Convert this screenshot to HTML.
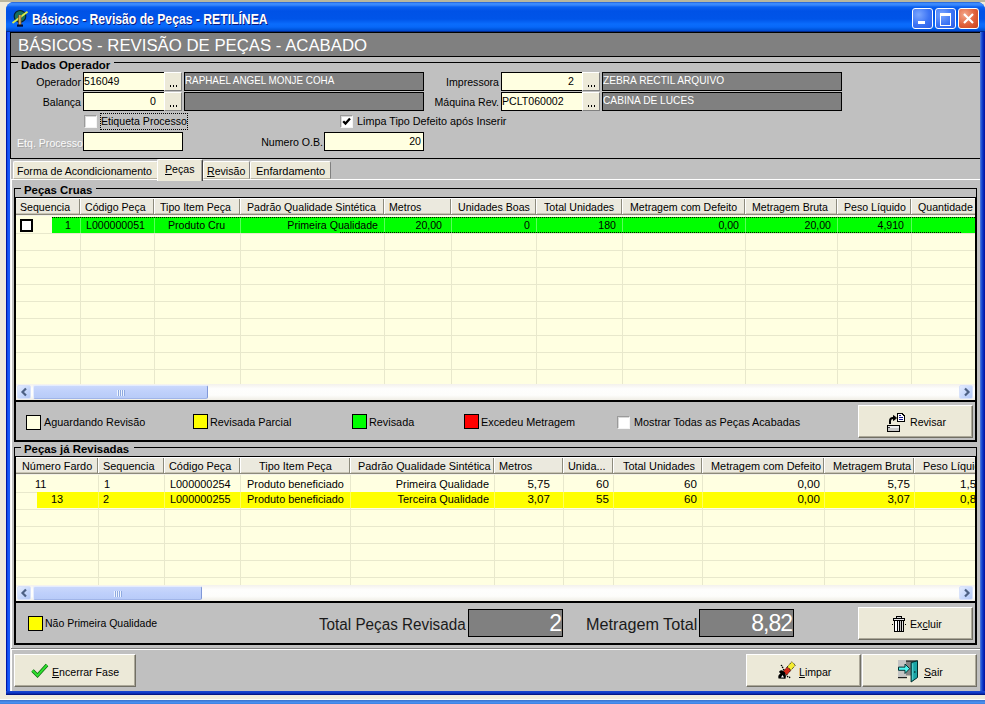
<!DOCTYPE html>
<html><head><meta charset="utf-8"><style>
html,body{margin:0;padding:0}
body{width:985px;height:704px;position:relative;overflow:hidden;font-family:"Liberation Sans",sans-serif;font-size:10.6px;color:#000}
.a{position:absolute}
.t{position:absolute;white-space:nowrap;line-height:13px}
svg.a{overflow:visible}
</style></head><body>
<div class="a" style="left:0px;top:0px;width:985px;height:704px;background:#eeebdc"></div>
<div class="a" style="left:0px;top:0px;width:985px;height:2px;background:#bab79e"></div>
<div class="a" style="left:0px;top:699px;width:985px;height:1px;background:#fbfffc"></div>
<div class="a" style="left:0px;top:700px;width:985px;height:4px;background:linear-gradient(#3a70c8,#4a90f0 60%,#3a80e0)"></div>
<div class="a" style="left:6px;top:2px;width:979px;height:693px;background:#0a4ee0;border-radius:8px 8px 0 0"></div>
<div class="a" style="left:6px;top:2px;width:979px;height:30px;background:linear-gradient(#1a4cc0 0px,#3c8cff 1px,#3a88fc 3px,#0a60f0 5px,#0052e6 9px,#0054e8 17px,#0a6cfc 22px,#0868f8 25px,#005ae4 27px,#0048cc 29px,#000c50 30px);border-radius:8px 8px 0 0"></div>
<div class="a" style="left:6px;top:32px;width:4px;height:659px;background:linear-gradient(90deg,#0018a8 0 1px,#0a4ae8 1px,#1c5cfc 3px,#1a58f0 4px)"></div>
<div class="a" style="left:980px;top:32px;width:5px;height:659px;background:linear-gradient(90deg,#5a80d0,#1a4ed8 35%,#0a32c0 60%,#0010a0)"></div>
<div class="a" style="left:6px;top:691px;width:979px;height:4px;background:linear-gradient(#1a48d0,#0a38c8 50%,#000a70)"></div>
<div class="a" style="left:10px;top:32px;width:970px;height:659px;background:#c0c0c0"></div>
<svg class="a" style="left:11px;top:8px" width="20" height="20" viewBox="0 0 20 20"><circle cx="9" cy="8.3" r="5.8" fill="#17705e" stroke="#062030" stroke-width="1.2"/>
<path d="M1.5 15 L16.5 3.8" stroke="#d8ec48" stroke-width="1.9"/>
<rect x="7.3" y="7" width="3" height="10" fill="#8a5010"/>
<rect x="8.4" y="7" width="1" height="10" fill="#f4e8b0"/>
<rect x="6" y="16.5" width="6" height="2.2" fill="#000a30"/></svg>
<div class="t" style="left:32px;top:13px;color:#fff;font-weight:bold;font-size:14px;transform:scaleX(0.87);transform-origin:0 0;text-shadow:1px 1px #0a1a80">Básicos - Revisão de Peças - RETILÍNEA</div>
<div class="a" style="left:912px;top:8px;width:21px;height:21px;background:radial-gradient(circle at 30% 30%,#7aa6ff,#3c74f4 55%,#2a5ce6);border:1px solid #fff;box-sizing:border-box;border-radius:3px"><div class="a" style="left:5px;top:12px;width:7px;height:3px;background:#fff"></div></div>
<div class="a" style="left:935px;top:8px;width:21px;height:21px;background:radial-gradient(circle at 30% 30%,#7aa6ff,#3c74f4 55%,#2a5ce6);border:1px solid #fff;box-sizing:border-box;border-radius:3px"><div class="a" style="left:4px;top:4px;width:9px;height:9px;border:1px solid #fff;border-top-width:3px;box-sizing:content-box"></div></div>
<div class="a" style="left:958px;top:8px;width:21px;height:21px;background:radial-gradient(circle at 30% 30%,#f4a88c,#e0603a 55%,#c8401c);border:1px solid #fff;box-sizing:border-box;border-radius:3px"><svg class="a" style="left:-1px;top:-1px" width="21" height="21"><path d="M6 6 L15 15 M15 6 L6 15" stroke="#fff" stroke-width="2.2"/></svg></div>
<div class="a" style="left:10px;top:32px;width:970px;height:25px;background:#808080;border:1px solid #000;border-right:none;box-sizing:border-box"></div>
<div class="t" style="left:18px;top:39px;color:#fff;font-size:16.75px;line-height:13px">BÁSICOS - REVISÃO DE PEÇAS - ACABADO</div>
<div class="a" style="left:10px;top:57px;width:970px;height:102px;border-left:1px solid #000;border-bottom:1px solid #000;box-sizing:border-box"></div>
<div class="a" style="left:11px;top:62px;width:969px;height:1px;background:#000"></div>
<div class="a" style="left:18px;top:57px;width:96px;height:11px;background:#c0c0c0"></div>
<div class="t" style="left:21px;top:59px;font-weight:bold;font-size:11.4px">Dados Operador</div>
<div class="t" style="right:904px;top:76px;text-align:right;">Operador</div>
<div class="a" style="left:83px;top:72px;width:82px;height:19px;background:#ffffe1;border:1px solid #000;box-sizing:border-box"></div>
<div class="t" style="left:84px;top:75px;">516049</div>
<div class="a" style="left:164px;top:72px;width:18px;height:19px;background:#ece9d8;border-top:1px solid #fff;border-left:1px solid #fff;border-right:1px solid #808080;border-bottom:1px solid #808080;box-sizing:border-box"><div class="a" style="left:5px;top:12px;width:1px;height:2px;background:#000"></div><div class="a" style="left:8px;top:12px;width:1px;height:2px;background:#000"></div><div class="a" style="left:11px;top:12px;width:1px;height:2px;background:#000"></div></div>
<div class="a" style="left:184px;top:72px;width:240px;height:19px;background:#808080;border:1px solid #000;box-sizing:border-box"></div>
<div class="t" style="left:185px;top:74px;color:#fff"><span style="display:inline-block;transform:scaleX(0.93);transform-origin:0 0">RAPHAEL ANGEL MONJE COHA</span></div>
<div class="t" style="right:904px;top:96px;text-align:right;">Balança</div>
<div class="a" style="left:83px;top:92px;width:82px;height:19px;background:#ffffe1;border:1px solid #000;box-sizing:border-box"></div>
<div class="t" style="right:829px;top:95px;text-align:right;">0</div>
<div class="a" style="left:164px;top:92px;width:18px;height:19px;background:#ece9d8;border-top:1px solid #fff;border-left:1px solid #fff;border-right:1px solid #808080;border-bottom:1px solid #808080;box-sizing:border-box"><div class="a" style="left:5px;top:12px;width:1px;height:2px;background:#000"></div><div class="a" style="left:8px;top:12px;width:1px;height:2px;background:#000"></div><div class="a" style="left:11px;top:12px;width:1px;height:2px;background:#000"></div></div>
<div class="a" style="left:184px;top:92px;width:240px;height:19px;background:#808080;border:1px solid #000;box-sizing:border-box"></div>
<div class="a" style="left:84px;top:115px;width:13px;height:13px;background:#fff;border-top:1px solid #9a9a9a;border-left:1px solid #9a9a9a;border-right:1px solid #f4f4f4;border-bottom:1px solid #f4f4f4;box-shadow:inset 1px 1px 0 #d8d8d8;box-sizing:border-box"></div>
<div class="a" style="left:100px;top:113px;width:88px;height:17px;border:1px dotted #000;box-sizing:border-box"></div>
<div class="t" style="left:101px;top:115px;">Etiqueta Processo</div>
<div class="t" style="left:17px;top:137px;color:#fafafa;text-shadow:1px 1px 0 #a8a8a8">Etq. Processo</div>
<div class="a" style="left:83px;top:132px;width:100px;height:19px;background:#ffffe1;border:1px solid #000;box-sizing:border-box"></div>
<div class="t" style="right:486px;top:76px;text-align:right;">Impressora</div>
<div class="a" style="left:501px;top:72px;width:82px;height:19px;background:#ffffe1;border:1px solid #000;box-sizing:border-box"></div>
<div class="t" style="right:411px;top:75px;text-align:right;">2</div>
<div class="a" style="left:582px;top:72px;width:18px;height:19px;background:#ece9d8;border-top:1px solid #fff;border-left:1px solid #fff;border-right:1px solid #808080;border-bottom:1px solid #808080;box-sizing:border-box"><div class="a" style="left:5px;top:12px;width:1px;height:2px;background:#000"></div><div class="a" style="left:8px;top:12px;width:1px;height:2px;background:#000"></div><div class="a" style="left:11px;top:12px;width:1px;height:2px;background:#000"></div></div>
<div class="a" style="left:602px;top:72px;width:240px;height:19px;background:#808080;border:1px solid #000;box-sizing:border-box"></div>
<div class="t" style="left:603px;top:74px;color:#fff"><span style="display:inline-block;transform:scaleX(0.96);transform-origin:0 0">ZEBRA RECTIL ARQUIVO</span></div>
<div class="t" style="right:486px;top:96px;text-align:right;">Máquina Rev.</div>
<div class="a" style="left:501px;top:92px;width:82px;height:19px;background:#ffffe1;border:1px solid #000;box-sizing:border-box"></div>
<div class="t" style="left:502px;top:95px;">PCLT060002</div>
<div class="a" style="left:582px;top:92px;width:18px;height:19px;background:#ece9d8;border-top:1px solid #fff;border-left:1px solid #fff;border-right:1px solid #808080;border-bottom:1px solid #808080;box-sizing:border-box"><div class="a" style="left:5px;top:12px;width:1px;height:2px;background:#000"></div><div class="a" style="left:8px;top:12px;width:1px;height:2px;background:#000"></div><div class="a" style="left:11px;top:12px;width:1px;height:2px;background:#000"></div></div>
<div class="a" style="left:602px;top:92px;width:240px;height:19px;background:#808080;border:1px solid #000;box-sizing:border-box"></div>
<div class="t" style="left:603px;top:94px;color:#fff"><span style="display:inline-block;transform:scaleX(0.96);transform-origin:0 0">CABINA DE LUCES</span></div>
<div class="a" style="left:340px;top:115px;width:13px;height:13px;background:#fff;border-top:1px solid #9a9a9a;border-left:1px solid #9a9a9a;border-right:1px solid #f4f4f4;border-bottom:1px solid #f4f4f4;box-shadow:inset 1px 1px 0 #d8d8d8;box-sizing:border-box"><svg class="a" style="left:1px;top:1px" width="9" height="9"><path d="M1.2 4.2 L3.5 6.6 L8 1.6" stroke="#000" stroke-width="2.3" fill="none"/></svg></div>
<div class="t" style="left:357px;top:115px;font-size:10.8px">Limpa Tipo Defeito após Inserir</div>
<div class="t" style="right:662px;top:136px;text-align:right;">Numero O.B.</div>
<div class="a" style="left:324px;top:132px;width:100px;height:19px;background:#ffffe1;border:1px solid #000;box-sizing:border-box"></div>
<div class="t" style="right:564px;top:135px;text-align:right;">20</div>
<div class="a" style="left:11px;top:179px;width:969px;height:512px;background:#c0c0c0;border-top:1px solid #fff;border-left:1px solid #fff;box-sizing:border-box"></div>
<div class="a" style="left:10px;top:159px;width:1px;height:532px;background:#f4f4f4"></div>
<div class="a" style="left:13px;top:161px;width:145px;height:18px;background:#ece9d8;border-top:1px solid #fff;border-left:1px solid #fff;border-right:1px solid #808080;border-bottom:1px solid #b8b4a4;box-sizing:border-box;border-radius:2px 2px 0 0"></div>
<div class="t" style="left:17px;top:165px;">Forma de Acondicionamento</div>
<div class="a" style="left:203px;top:161px;width:47px;height:18px;background:#ece9d8;border-top:1px solid #fff;border-left:1px solid #fff;border-right:1px solid #808080;border-bottom:1px solid #b8b4a4;box-sizing:border-box;border-radius:2px 2px 0 0"></div>
<div class="t" style="left:207px;top:165px;"><u>R</u>evisão</div>
<div class="a" style="left:250px;top:161px;width:81px;height:18px;background:#ece9d8;border-top:1px solid #fff;border-left:1px solid #fff;border-right:1px solid #808080;border-bottom:1px solid #b8b4a4;box-sizing:border-box;border-radius:2px 2px 0 0"></div>
<div class="t" style="left:256px;top:165px;"><span style="display:inline-block;transform:scaleX(1.04);transform-origin:0 0">Enfardamento</span></div>
<div class="a" style="left:157px;top:159px;width:46px;height:22px;background:#ece9d8;border-top:1px solid #fff;border-left:1px solid #fff;border-right:1px solid #404040;box-shadow:inset -1px 0 0 #a0a0a0;box-sizing:border-box;border-radius:2px 2px 0 0"></div>
<div class="t" style="left:165px;top:163px;"><u>P</u>eças</div>
<div class="a" style="left:14px;top:188px;width:963px;height:254px;border:1px solid #000;box-sizing:border-box"></div>
<div class="a" style="left:15px;top:440px;width:961px;height:1px;background:#000"></div>
<div class="a" style="left:15px;top:197px;width:1px;height:244px;background:#000"></div>
<div class="a" style="left:975px;top:197px;width:1px;height:244px;background:#000"></div>
<div class="a" style="left:21px;top:184px;width:75px;height:11px;background:#c0c0c0"></div>
<div class="t" style="left:24px;top:184px;font-weight:bold;font-size:11.4px">Peças Cruas</div>
<div class="a" style="left:14px;top:197px;width:962px;height:205px;background:#ffffe1;border-left:2px solid #000;border-top:1px solid #000;border-right:1px solid #000;border-bottom:2px solid #000;box-sizing:border-box"></div>
<div class="a" style="left:16px;top:198px;width:959px;height:17px;background:#ebe9de;border-top:1px solid #fff;border-bottom:1px solid #8c8a7c;box-shadow:inset 0 -1px 0 #c8c4b4;box-sizing:border-box"></div>
<div class="a" style="left:16px;top:215px;width:959px;height:1px;background:#f4f2e8"></div>
<div class="a" style="left:0;top:0;width:985px;height:704px;clip-path:inset(0 10px 0 0)">
<div class="a" style="left:16px;top:233px;width:959px;height:1px;background:#e8e8cc"></div>
<div class="a" style="left:16px;top:250px;width:959px;height:1px;background:#e8e8cc"></div>
<div class="a" style="left:16px;top:267px;width:959px;height:1px;background:#e8e8cc"></div>
<div class="a" style="left:16px;top:284px;width:959px;height:1px;background:#e8e8cc"></div>
<div class="a" style="left:16px;top:301px;width:959px;height:1px;background:#e8e8cc"></div>
<div class="a" style="left:16px;top:318px;width:959px;height:1px;background:#e8e8cc"></div>
<div class="a" style="left:16px;top:335px;width:959px;height:1px;background:#e8e8cc"></div>
<div class="a" style="left:16px;top:352px;width:959px;height:1px;background:#e8e8cc"></div>
<div class="a" style="left:16px;top:369px;width:959px;height:1px;background:#e8e8cc"></div>
<div class="a" style="left:80px;top:216px;width:1px;height:168px;background:#e8e8cc"></div>
<div class="a" style="left:79px;top:199px;width:1px;height:15px;background:#8c8a7c"></div>
<div class="a" style="left:80px;top:199px;width:1px;height:15px;background:#fff"></div>
<div class="t" style="left:20px;top:201px;width:59px;overflow:hidden;">Sequencia</div>
<div class="a" style="left:154px;top:216px;width:1px;height:168px;background:#e8e8cc"></div>
<div class="a" style="left:153px;top:199px;width:1px;height:15px;background:#8c8a7c"></div>
<div class="a" style="left:154px;top:199px;width:1px;height:15px;background:#fff"></div>
<div class="t" style="left:85px;top:201px;width:68px;overflow:hidden;">Código Peça</div>
<div class="a" style="left:240px;top:216px;width:1px;height:168px;background:#e8e8cc"></div>
<div class="a" style="left:239px;top:199px;width:1px;height:15px;background:#8c8a7c"></div>
<div class="a" style="left:240px;top:199px;width:1px;height:15px;background:#fff"></div>
<div class="t" style="left:160px;top:201px;width:79px;overflow:hidden;">Tipo Item Peça</div>
<div class="a" style="left:384px;top:216px;width:1px;height:168px;background:#e8e8cc"></div>
<div class="a" style="left:383px;top:199px;width:1px;height:15px;background:#8c8a7c"></div>
<div class="a" style="left:384px;top:199px;width:1px;height:15px;background:#fff"></div>
<div class="t" style="left:247px;top:201px;width:136px;overflow:hidden;">Padrão Qualidade Sintética</div>
<div class="a" style="left:451px;top:216px;width:1px;height:168px;background:#e8e8cc"></div>
<div class="a" style="left:450px;top:199px;width:1px;height:15px;background:#8c8a7c"></div>
<div class="a" style="left:451px;top:199px;width:1px;height:15px;background:#fff"></div>
<div class="t" style="left:389px;top:201px;width:61px;overflow:hidden;">Metros</div>
<div class="a" style="left:536px;top:216px;width:1px;height:168px;background:#e8e8cc"></div>
<div class="a" style="left:535px;top:199px;width:1px;height:15px;background:#8c8a7c"></div>
<div class="a" style="left:536px;top:199px;width:1px;height:15px;background:#fff"></div>
<div class="t" style="left:458px;top:201px;width:77px;overflow:hidden;">Unidades Boas</div>
<div class="a" style="left:622px;top:216px;width:1px;height:168px;background:#e8e8cc"></div>
<div class="a" style="left:621px;top:199px;width:1px;height:15px;background:#8c8a7c"></div>
<div class="a" style="left:622px;top:199px;width:1px;height:15px;background:#fff"></div>
<div class="t" style="left:544px;top:201px;width:77px;overflow:hidden;">Total Unidades</div>
<div class="a" style="left:745px;top:216px;width:1px;height:168px;background:#e8e8cc"></div>
<div class="a" style="left:744px;top:199px;width:1px;height:15px;background:#8c8a7c"></div>
<div class="a" style="left:745px;top:199px;width:1px;height:15px;background:#fff"></div>
<div class="t" style="left:630px;top:201px;width:114px;overflow:hidden;">Metragem com Defeito</div>
<div class="a" style="left:837px;top:216px;width:1px;height:168px;background:#e8e8cc"></div>
<div class="a" style="left:836px;top:199px;width:1px;height:15px;background:#8c8a7c"></div>
<div class="a" style="left:837px;top:199px;width:1px;height:15px;background:#fff"></div>
<div class="t" style="left:752px;top:201px;width:84px;overflow:hidden;">Metragem Bruta</div>
<div class="a" style="left:911px;top:216px;width:1px;height:168px;background:#e8e8cc"></div>
<div class="a" style="left:910px;top:199px;width:1px;height:15px;background:#8c8a7c"></div>
<div class="a" style="left:911px;top:199px;width:1px;height:15px;background:#fff"></div>
<div class="t" style="left:844px;top:201px;width:66px;overflow:hidden;">Peso Líquido</div>
<div class="t" style="left:918px;top:201px;width:57px;overflow:hidden;">Quantidade</div>
<div class="a" style="left:52px;top:217px;width:923px;height:16px;background:#00ff00"></div>
<div class="a" style="left:80px;top:217px;width:1px;height:16px;background:rgba(255,255,255,0.35)"></div>
<div class="a" style="left:154px;top:217px;width:1px;height:16px;background:rgba(255,255,255,0.35)"></div>
<div class="a" style="left:240px;top:217px;width:1px;height:16px;background:rgba(255,255,255,0.35)"></div>
<div class="a" style="left:384px;top:217px;width:1px;height:16px;background:rgba(255,255,255,0.35)"></div>
<div class="a" style="left:451px;top:217px;width:1px;height:16px;background:rgba(255,255,255,0.35)"></div>
<div class="a" style="left:536px;top:217px;width:1px;height:16px;background:rgba(255,255,255,0.35)"></div>
<div class="a" style="left:622px;top:217px;width:1px;height:16px;background:rgba(255,255,255,0.35)"></div>
<div class="a" style="left:745px;top:217px;width:1px;height:16px;background:rgba(255,255,255,0.35)"></div>
<div class="a" style="left:837px;top:217px;width:1px;height:16px;background:rgba(255,255,255,0.35)"></div>
<div class="a" style="left:911px;top:217px;width:1px;height:16px;background:rgba(255,255,255,0.35)"></div>
<div class="t" style="right:914px;top:219px;text-align:right;">1</div>
<div class="t" style="left:86px;top:219px;">L000000051</div>
<div class="t" style="left:154px;width:85px;top:219px;text-align:center;">Produto Cru</div>
<div class="t" style="right:607px;top:219px;text-align:right;">Primeira Qualidade</div>
<div class="t" style="right:543px;top:219px;text-align:right;">20,00</div>
<div class="t" style="right:455px;top:219px;text-align:right;">0</div>
<div class="t" style="right:369px;top:219px;text-align:right;">180</div>
<div class="t" style="right:246px;top:219px;text-align:right;">0,00</div>
<div class="t" style="right:154px;top:219px;text-align:right;">20,00</div>
<div class="t" style="right:81px;top:219px;text-align:right;">4,910</div>
</div>
<div class="a" style="left:16px;top:384px;width:959px;height:16px;background:linear-gradient(#f3f1ec,#fefefd 30%,#fdfdfb 70%,#f0eee6)"></div>
<div class="a" style="left:17px;top:385px;width:14px;height:14px;background:linear-gradient(135deg,#e4ecfe,#c4d6fc 60%,#b4c8f6);border:1px solid #d8e2fa;border-radius:2px;box-sizing:border-box"><svg class="a" style="left:0;top:0" width="13" height="12"><path d="M8 2.5 L4.5 6 L8 9.5" stroke="#4d6185" stroke-width="2.2" fill="none"/></svg></div>
<div class="a" style="left:33px;top:385px;width:175px;height:14px;background:linear-gradient(#cad8fc,#bfd0fb 50%,#b8cbf8);border:1px solid #e4ecfe;border-right-color:#8098d8;border-bottom-color:#a0b4e8;border-radius:2px;box-sizing:border-box"><div class="a" style="left:83px;top:4px;width:8px;height:6px;background:repeating-linear-gradient(90deg,#eef4ff 0 1px,#8faae0 1px 2px)"></div></div>
<div class="a" style="left:959px;top:385px;width:14px;height:14px;background:linear-gradient(135deg,#e4ecfe,#c4d6fc 60%,#b4c8f6);border:1px solid #d8e2fa;border-radius:2px;box-sizing:border-box"><svg class="a" style="left:0;top:0" width="13" height="12"><path d="M5 2.5 L8.5 6 L5 9.5" stroke="#4d6185" stroke-width="2.2" fill="none"/></svg></div>
<div class="a" style="left:20px;top:219px;width:13px;height:13px;background:#fff;border:2px solid #000;box-sizing:border-box"></div>
<div class="a" style="left:52px;top:217px;width:923px;height:1px;background:repeating-linear-gradient(90deg,#000 0 1px,transparent 1px 2px)"></div>
<div class="a" style="left:340px;top:232px;width:621px;height:1px;background:repeating-linear-gradient(90deg,#000 0 1px,transparent 1px 2px)"></div>
<div class="a" style="left:26px;top:415px;width:15px;height:15px;background:#ffffe1;border:1px solid #000;box-sizing:border-box"></div>
<div class="t" style="left:44px;top:416px;font-size:10.85px">Aguardando Revisão</div>
<div class="a" style="left:193px;top:414px;width:15px;height:15px;background:#ffff00;border:1px solid #000;box-sizing:border-box"></div>
<div class="t" style="left:210px;top:416px;font-size:10.85px">Revisada Parcial</div>
<div class="a" style="left:352px;top:414px;width:15px;height:15px;background:#00ff00;border:1px solid #000;box-sizing:border-box"></div>
<div class="t" style="left:369px;top:416px;font-size:10.85px">Revisada</div>
<div class="a" style="left:464px;top:414px;width:15px;height:15px;background:#ff0000;border:1px solid #000;box-sizing:border-box"></div>
<div class="t" style="left:481px;top:416px;font-size:10.85px">Excedeu Metragem</div>
<div class="a" style="left:617px;top:416px;width:13px;height:13px;background:#fff;border-top:1px solid #9a9a9a;border-left:1px solid #9a9a9a;border-right:1px solid #f4f4f4;border-bottom:1px solid #f4f4f4;box-shadow:inset 1px 1px 0 #d8d8d8;box-sizing:border-box"></div>
<div class="t" style="left:634px;top:416px;font-size:10.8px">Mostrar Todas as Peças Acabadas</div>
<div class="a" style="left:858px;top:405px;width:115px;height:33px;background:#ece9d8;border-top:1px solid #fff;border-left:1px solid #fff;border-right:1px solid #716f64;border-bottom:1px solid #716f64;box-shadow:inset -1px -1px 0 #aca899;box-sizing:border-box"></div>
<svg class="a" style="left:886px;top:412px" width="20" height="20" viewBox="0 0 20 20"><path d="M4 12 L4 9 Q4 6 7 6 L8 6" stroke="#000" stroke-width="2" fill="none"/>
<path d="M7.5 3.5 L10.5 6 L7.5 8.5 Z" fill="#000" stroke="#000" stroke-width="1"/>
<g shape-rendering="crispEdges">
<path d="M11 1 L17 1 L17 2 L18 2 L18 3 L19 3 L19 10 L11 10 Z" fill="#000"/>
<path d="M12 2 L16 2 L16 3 L17 3 L17 4 L18 4 L18 9 L12 9 Z" fill="#fff"/>
<rect x="13" y="3" width="2" height="1" fill="#10108a"/><rect x="13" y="5" width="4" height="1" fill="#10108a"/><rect x="13" y="7" width="4" height="1" fill="#10108a"/>
<rect x="1" y="13" width="13" height="7" fill="#000"/>
<rect x="2" y="14" width="11" height="5" fill="#c8c8c8"/><rect x="2" y="14" width="11" height="2" fill="#ececec"/><rect x="2" y="15" width="2" height="1" fill="#404040"/>
</g></svg>
<div class="t" style="left:910px;top:416px;">Revisar</div>
<div class="a" style="left:14px;top:447px;width:963px;height:198px;border:1px solid #000;box-sizing:border-box"></div>
<div class="a" style="left:15px;top:643px;width:961px;height:1px;background:#000"></div>
<div class="a" style="left:15px;top:456px;width:1px;height:188px;background:#000"></div>
<div class="a" style="left:975px;top:456px;width:1px;height:188px;background:#000"></div>
<div class="a" style="left:21px;top:443px;width:113px;height:11px;background:#c0c0c0"></div>
<div class="t" style="left:24px;top:443px;font-weight:bold;font-size:11.4px">Peças já Revisadas</div>
<div class="a" style="left:14px;top:456px;width:962px;height:147px;background:#ffffe1;border-left:2px solid #000;border-top:1px solid #000;border-right:1px solid #000;border-bottom:2px solid #000;box-sizing:border-box"></div>
<div class="a" style="left:16px;top:457px;width:959px;height:17px;background:#ebe9de;border-top:1px solid #fff;border-bottom:1px solid #8c8a7c;box-shadow:inset 0 -1px 0 #c8c4b4;box-sizing:border-box"></div>
<div class="a" style="left:16px;top:474px;width:959px;height:1px;background:#f4f2e8"></div>
<div class="a" style="left:0;top:0;width:985px;height:704px;clip-path:inset(0 10px 0 0)">
<div class="a" style="left:16px;top:492px;width:959px;height:1px;background:#e8e8cc"></div>
<div class="a" style="left:16px;top:509px;width:959px;height:1px;background:#e8e8cc"></div>
<div class="a" style="left:16px;top:526px;width:959px;height:1px;background:#e8e8cc"></div>
<div class="a" style="left:16px;top:543px;width:959px;height:1px;background:#e8e8cc"></div>
<div class="a" style="left:16px;top:560px;width:959px;height:1px;background:#e8e8cc"></div>
<div class="a" style="left:16px;top:577px;width:959px;height:1px;background:#e8e8cc"></div>
<div class="a" style="left:98px;top:475px;width:1px;height:110px;background:#e8e8cc"></div>
<div class="a" style="left:97px;top:458px;width:1px;height:15px;background:#8c8a7c"></div>
<div class="a" style="left:98px;top:458px;width:1px;height:15px;background:#fff"></div>
<div class="t" style="left:22px;top:460px;width:75px;overflow:hidden;font-size:10.9px">Número Fardo</div>
<div class="a" style="left:164px;top:475px;width:1px;height:110px;background:#e8e8cc"></div>
<div class="a" style="left:163px;top:458px;width:1px;height:15px;background:#8c8a7c"></div>
<div class="a" style="left:164px;top:458px;width:1px;height:15px;background:#fff"></div>
<div class="t" style="left:103px;top:460px;width:60px;overflow:hidden;font-size:10.9px">Sequencia</div>
<div class="a" style="left:240px;top:475px;width:1px;height:110px;background:#e8e8cc"></div>
<div class="a" style="left:239px;top:458px;width:1px;height:15px;background:#8c8a7c"></div>
<div class="a" style="left:240px;top:458px;width:1px;height:15px;background:#fff"></div>
<div class="t" style="left:169px;top:460px;width:70px;overflow:hidden;font-size:10.9px">Código Peça</div>
<div class="a" style="left:350px;top:475px;width:1px;height:110px;background:#e8e8cc"></div>
<div class="a" style="left:349px;top:458px;width:1px;height:15px;background:#8c8a7c"></div>
<div class="a" style="left:350px;top:458px;width:1px;height:15px;background:#fff"></div>
<div class="t" style="left:259px;top:460px;width:90px;overflow:hidden;font-size:10.9px">Tipo Item Peça</div>
<div class="a" style="left:494px;top:475px;width:1px;height:110px;background:#e8e8cc"></div>
<div class="a" style="left:493px;top:458px;width:1px;height:15px;background:#8c8a7c"></div>
<div class="a" style="left:494px;top:458px;width:1px;height:15px;background:#fff"></div>
<div class="t" style="left:358px;top:460px;width:135px;overflow:hidden;font-size:10.9px">Padrão Qualidade Sintética</div>
<div class="a" style="left:563px;top:475px;width:1px;height:110px;background:#e8e8cc"></div>
<div class="a" style="left:562px;top:458px;width:1px;height:15px;background:#8c8a7c"></div>
<div class="a" style="left:563px;top:458px;width:1px;height:15px;background:#fff"></div>
<div class="t" style="left:499px;top:460px;width:63px;overflow:hidden;font-size:10.9px">Metros</div>
<div class="a" style="left:613px;top:475px;width:1px;height:110px;background:#e8e8cc"></div>
<div class="a" style="left:612px;top:458px;width:1px;height:15px;background:#8c8a7c"></div>
<div class="a" style="left:613px;top:458px;width:1px;height:15px;background:#fff"></div>
<div class="t" style="left:568px;top:460px;width:44px;overflow:hidden;font-size:10.9px">Unida...</div>
<div class="a" style="left:702px;top:475px;width:1px;height:110px;background:#e8e8cc"></div>
<div class="a" style="left:701px;top:458px;width:1px;height:15px;background:#8c8a7c"></div>
<div class="a" style="left:702px;top:458px;width:1px;height:15px;background:#fff"></div>
<div class="t" style="left:623px;top:460px;width:78px;overflow:hidden;font-size:10.9px">Total Unidades</div>
<div class="a" style="left:824px;top:475px;width:1px;height:110px;background:#e8e8cc"></div>
<div class="a" style="left:823px;top:458px;width:1px;height:15px;background:#8c8a7c"></div>
<div class="a" style="left:824px;top:458px;width:1px;height:15px;background:#fff"></div>
<div class="t" style="left:711px;top:460px;width:112px;overflow:hidden;font-size:10.9px">Metragem com Defeito</div>
<div class="a" style="left:914px;top:475px;width:1px;height:110px;background:#e8e8cc"></div>
<div class="a" style="left:913px;top:458px;width:1px;height:15px;background:#8c8a7c"></div>
<div class="a" style="left:914px;top:458px;width:1px;height:15px;background:#fff"></div>
<div class="t" style="left:833px;top:460px;width:80px;overflow:hidden;font-size:10.9px">Metragem Bruta</div>
<div class="t" style="left:923px;top:460px;width:52px;overflow:hidden;font-size:10.9px">Peso Líquido</div>
<div class="t" style="left:35px;top:478px;font-size:10.9px">11</div>
<div class="t" style="left:104px;top:478px;font-size:10.9px">1</div>
<div class="t" style="left:170px;top:478px;font-size:10.9px">L000000254</div>
<div class="t" style="left:239px;width:113px;top:478px;text-align:center;font-size:10.9px">Produto beneficiado</div>
<div class="t" style="right:496px;top:478px;text-align:right;font-size:10.9px">Primeira Qualidade</div>
<div class="t" style="right:435px;top:478px;text-align:right;font-size:10.9px"><span style="font-size:11.6px;position:relative;top:-1px">5,75</span></div>
<div class="t" style="right:376px;top:478px;text-align:right;font-size:10.9px"><span style="font-size:11.6px;position:relative;top:-1px">60</span></div>
<div class="t" style="right:288px;top:478px;text-align:right;font-size:10.9px"><span style="font-size:11.6px;position:relative;top:-1px">60</span></div>
<div class="t" style="right:165px;top:478px;text-align:right;font-size:10.9px"><span style="font-size:11.6px;position:relative;top:-1px">0,00</span></div>
<div class="t" style="right:75px;top:478px;text-align:right;font-size:10.9px"><span style="font-size:11.6px;position:relative;top:-1px">5,75</span></div>
<div class="t" style="left:960px;top:478px;font-size:10.9px"><span style="font-size:11.6px;position:relative;top:-1px">1,50</span></div>
<div class="a" style="left:37px;top:492px;width:938px;height:16px;background:#ffff00"></div>
<div class="a" style="left:98px;top:492px;width:1px;height:16px;background:rgba(255,255,255,0.35)"></div>
<div class="a" style="left:164px;top:492px;width:1px;height:16px;background:rgba(255,255,255,0.35)"></div>
<div class="a" style="left:240px;top:492px;width:1px;height:16px;background:rgba(255,255,255,0.35)"></div>
<div class="a" style="left:350px;top:492px;width:1px;height:16px;background:rgba(255,255,255,0.35)"></div>
<div class="a" style="left:494px;top:492px;width:1px;height:16px;background:rgba(255,255,255,0.35)"></div>
<div class="a" style="left:563px;top:492px;width:1px;height:16px;background:rgba(255,255,255,0.35)"></div>
<div class="a" style="left:613px;top:492px;width:1px;height:16px;background:rgba(255,255,255,0.35)"></div>
<div class="a" style="left:702px;top:492px;width:1px;height:16px;background:rgba(255,255,255,0.35)"></div>
<div class="a" style="left:824px;top:492px;width:1px;height:16px;background:rgba(255,255,255,0.35)"></div>
<div class="a" style="left:914px;top:492px;width:1px;height:16px;background:rgba(255,255,255,0.35)"></div>
<div class="t" style="left:51px;top:493px;font-size:10.9px">13</div>
<div class="t" style="left:103px;top:493px;font-size:10.9px">2</div>
<div class="t" style="left:170px;top:493px;font-size:10.9px">L000000255</div>
<div class="t" style="left:239px;width:113px;top:493px;text-align:center;font-size:10.9px">Produto beneficiado</div>
<div class="t" style="right:496px;top:493px;text-align:right;font-size:10.9px">Terceira Qualidade</div>
<div class="t" style="right:435px;top:493px;text-align:right;font-size:10.9px"><span style="font-size:11.6px;position:relative;top:-1px">3,07</span></div>
<div class="t" style="right:376px;top:493px;text-align:right;font-size:10.9px"><span style="font-size:11.6px;position:relative;top:-1px">55</span></div>
<div class="t" style="right:288px;top:493px;text-align:right;font-size:10.9px"><span style="font-size:11.6px;position:relative;top:-1px">60</span></div>
<div class="t" style="right:165px;top:493px;text-align:right;font-size:10.9px"><span style="font-size:11.6px;position:relative;top:-1px">0,00</span></div>
<div class="t" style="right:75px;top:493px;text-align:right;font-size:10.9px"><span style="font-size:11.6px;position:relative;top:-1px">3,07</span></div>
<div class="t" style="left:960px;top:493px;font-size:10.9px"><span style="font-size:11.6px;position:relative;top:-1px">0,80</span></div>
</div>
<div class="a" style="left:16px;top:585px;width:959px;height:16px;background:linear-gradient(#f3f1ec,#fefefd 30%,#fdfdfb 70%,#f0eee6)"></div>
<div class="a" style="left:17px;top:586px;width:14px;height:14px;background:linear-gradient(135deg,#e4ecfe,#c4d6fc 60%,#b4c8f6);border:1px solid #d8e2fa;border-radius:2px;box-sizing:border-box"><svg class="a" style="left:0;top:0" width="13" height="12"><path d="M8 2.5 L4.5 6 L8 9.5" stroke="#4d6185" stroke-width="2.2" fill="none"/></svg></div>
<div class="a" style="left:33px;top:586px;width:169px;height:14px;background:linear-gradient(#cad8fc,#bfd0fb 50%,#b8cbf8);border:1px solid #e4ecfe;border-right-color:#8098d8;border-bottom-color:#a0b4e8;border-radius:2px;box-sizing:border-box"><div class="a" style="left:80px;top:4px;width:8px;height:6px;background:repeating-linear-gradient(90deg,#eef4ff 0 1px,#8faae0 1px 2px)"></div></div>
<div class="a" style="left:959px;top:586px;width:14px;height:14px;background:linear-gradient(135deg,#e4ecfe,#c4d6fc 60%,#b4c8f6);border:1px solid #d8e2fa;border-radius:2px;box-sizing:border-box"><svg class="a" style="left:0;top:0" width="13" height="12"><path d="M5 2.5 L8.5 6 L5 9.5" stroke="#4d6185" stroke-width="2.2" fill="none"/></svg></div>
<div class="a" style="left:28px;top:616px;width:15px;height:15px;background:#ffff00;border:1px solid #000;box-sizing:border-box"></div>
<div class="t" style="left:45px;top:617px;font-size:10.5px">Não Primeira Qualidade</div>
<div class="t" style="left:319px;top:618px;font-size:16px;line-height:13px;color:#1a1a1a;transform:scaleX(0.953);transform-origin:0 0">Total Peças Revisada</div>
<div class="a" style="left:468px;top:609px;width:95px;height:28px;background:#808080;border:1px solid #000;box-sizing:border-box"></div>
<div class="t" style="right:423px;top:617px;color:#fff;font-size:23px;line-height:13px">2</div>
<div class="t" style="left:586px;top:618px;font-size:16.2px;line-height:13px;color:#1a1a1a">Metragem Total</div>
<div class="a" style="left:699px;top:609px;width:95px;height:28px;background:#808080;border:1px solid #000;box-sizing:border-box"></div>
<div class="t" style="right:193px;top:617px;color:#fff;font-size:23px;letter-spacing:-1px;line-height:13px">8,82</div>
<div class="a" style="left:858px;top:607px;width:115px;height:33px;background:#ece9d8;border-top:1px solid #fff;border-left:1px solid #fff;border-right:1px solid #716f64;border-bottom:1px solid #716f64;box-shadow:inset -1px -1px 0 #aca899;box-sizing:border-box"></div>
<svg class="a" style="left:892px;top:615px" width="14" height="18" viewBox="0 0 14 18"><g shape-rendering="crispEdges">
<rect x="4" y="1" width="6" height="3" fill="#000"/><rect x="5" y="2" width="4" height="1" fill="#d8d8d8"/>
<rect x="1" y="3" width="12" height="3" fill="#000"/><rect x="2" y="4" width="10" height="1" fill="#e8e8e8"/>
<rect x="2" y="6" width="10" height="11" fill="#000"/>
<rect x="3" y="6" width="2" height="10" fill="#fff"/><rect x="6" y="6" width="1" height="10" fill="#f0f0f0"/><rect x="8" y="6" width="1" height="10" fill="#c8c8c8"/><rect x="10" y="6" width="1" height="10" fill="#e0e0e0"/>
<rect x="0" y="9" width="1" height="1" fill="#000"/><rect x="13" y="9" width="1" height="1" fill="#000"/>
</g></svg>
<div class="t" style="left:910px;top:618px;">Ex<u>c</u>luir</div>
<div class="a" style="left:11px;top:648px;width:969px;height:1px;background:#808080"></div>
<div class="a" style="left:11px;top:649px;width:969px;height:1px;background:#fff"></div>
<div class="a" style="left:14px;top:654px;width:122px;height:33px;background:#ece9d8;border-top:1px solid #fff;border-left:1px solid #fff;border-right:1px solid #716f64;border-bottom:1px solid #716f64;box-shadow:inset -1px -1px 0 #aca899;box-sizing:border-box"></div>
<svg class="a" style="left:31px;top:663px" width="18" height="15" viewBox="0 0 18 15"><path d="M1.5 7.5 L6.5 12.5 L16 2" stroke="#0a6a0a" stroke-width="3.4" fill="none"/><path d="M1.5 7.5 L6.5 12.5 L16 2" stroke="#30e030" stroke-width="2" fill="none"/></svg>
<div class="t" style="left:52px;top:666px;"><u>E</u>ncerrar Fase</div>
<div class="a" style="left:746px;top:654px;width:115px;height:33px;background:#ece9d8;border-top:1px solid #fff;border-left:1px solid #fff;border-right:1px solid #716f64;border-bottom:1px solid #716f64;box-shadow:inset -1px -1px 0 #aca899;box-sizing:border-box"></div>
<svg class="a" style="left:776px;top:660px" width="22" height="22" viewBox="0 0 22 22"><path d="M10.57 15.16 L6.83 11.84 L11.28 6.84 L15.02 10.16 Z" fill="#d82a1a" stroke="#000" stroke-width="0.9" stroke-dasharray="1 1"/>
<path d="M11.28 6.84 L15.73 1.84 L19.47 5.16 L15.02 10.16 Z" fill="#f4ec30" stroke="#000" stroke-width="0.9" stroke-dasharray="1 1"/>
<path d="M2.5 18.5 Q1.5 15 4.5 13.5 L3 12 Q4 9.5 6.5 10.5 L9 12.5 Q10.5 16 9.5 18.7 Z" fill="#000"/>
<path d="M5 17.5 L6.5 15 L8 17.5 Z" fill="#fff"/>
<circle cx="5.5" cy="5.5" r="0.8" fill="#000"/><circle cx="6.6" cy="7.4" r="0.8" fill="#000"/><circle cx="7.6" cy="9.6" r="0.8" fill="#000"/><circle cx="11.6" cy="16.6" r="0.8" fill="#000"/><circle cx="13.6" cy="17.4" r="0.8" fill="#000"/></svg>
<div class="t" style="left:799px;top:666px;"><u>L</u>impar</div>
<div class="a" style="left:862px;top:654px;width:115px;height:33px;background:#ece9d8;border-top:1px solid #fff;border-left:1px solid #fff;border-right:1px solid #716f64;border-bottom:1px solid #716f64;box-shadow:inset -1px -1px 0 #aca899;box-sizing:border-box"></div>
<svg class="a" style="left:896px;top:658px" width="24" height="26" viewBox="0 0 24 26"><rect x="2" y="2" width="8.5" height="17.5" fill="#c4c4c4"/>
<rect x="2" y="19" width="9" height="1.2" fill="#202020"/>
<rect x="10" y="2.5" width="11.5" height="15" fill="#858585"/>
<rect x="10" y="2.5" width="11.5" height="1.2" fill="#202020"/>
<path d="M15.1 4.5 L21.5 2.8 L21.5 19.5 L15.1 24 Z" fill="#1aa4a4" stroke="#002a2a" stroke-width="1"/>
<path d="M16.2 5.5 L17.2 5.2 L17.2 21.5 L16.2 22.2 Z" fill="#60d8d8"/>
<circle cx="18.8" cy="14" r="0.8" fill="#002020"/>
<path d="M2.5 9.1 L9 9.1 L9 6 L13.7 10.7 L9 15.5 L9 12.3 L2.5 12.3 Z" fill="#50f4f0" stroke="#003030" stroke-width="1"/></svg>
<div class="t" style="left:924px;top:666px;"><u>S</u>air</div>
</body></html>
